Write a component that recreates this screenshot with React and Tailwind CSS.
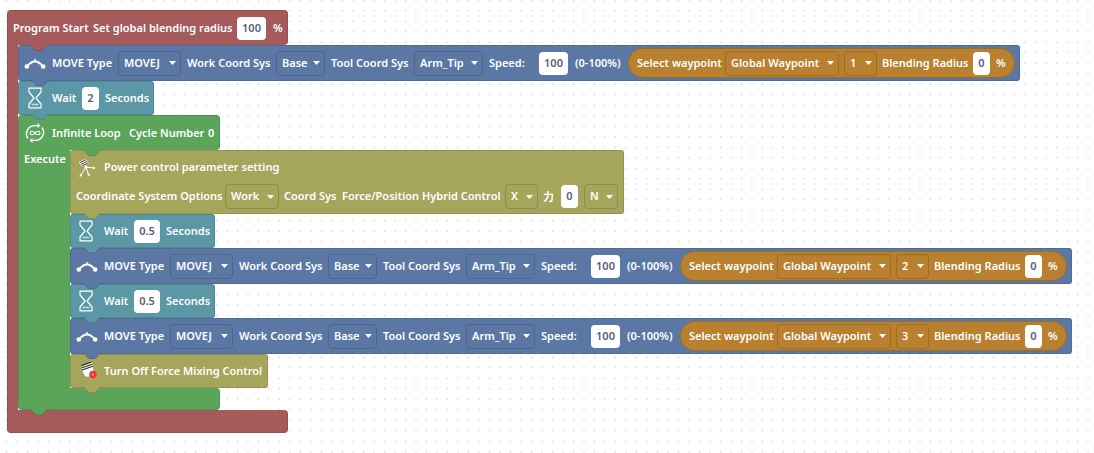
const RED = "#a55b5b";
const BLUE = "#5b78a5";
const TEAL = "#5b97a5";
const GREEN = "#5ba55b";
const OLIVE = "#a5a55b";

// Puzzle tab hanging from the bottom of a block, over the next one
const Tab = ({ color, className }) => (
  <svg width="22" height="6" viewBox="0 0 22 6" className={`absolute z-10 top-full ${className}`}>
    <path d="M0 0 C2 0 3 .6 4 1.6 L6.5 4.6 C7.2 5.5 8 6 9 6 H13 C14 6 14.8 5.5 15.5 4.6 L18 1.6 C19 .6 20 0 22 0Z" fill={color} />
    <path d="M1 0 C2.4 0 3 .6 4 1.6 L6.5 4.6 C7.2 5.5 8 5.6 9 5.6 H13 C14 5.6 14.8 5.5 15.5 4.6 L18 1.6 C19 .6 19.6 0 21 0" fill="none" stroke="#000" strokeOpacity=".15" />
  </svg>
);

const Caret = () => (
  <svg width="7" height="4" viewBox="0 0 7 4" className="shrink-0">
    <path d="M0 0 H7 L3.5 4Z" fill="#fff" />
  </svg>
);

const Label = ({ className, children }) => (
  <span className={`whitespace-nowrap text-white ${className}`}>{children}</span>
);

const Dropdown = ({ className, children }) => (
  <div className={`h-[25px] shrink-0 flex items-center justify-between pl-[5px] pr-[4px] rounded-[4px] border border-black/15 text-white whitespace-nowrap ${className}`}>
    <span>{children}</span>
    <Caret />
  </div>
);

const Input = ({ className, children }) => (
  <div className={`h-[23px] shrink-0 flex items-center justify-center rounded-[4px] bg-white text-[#575e75] ${className}`}>
    {children}
  </div>
);

const MoveIcon = () => (
  <svg width="22" height="12" viewBox="0 0 22 12" className="shrink-0">
    <path d="M3 9.5 Q11 -0.5 19 9.5" fill="none" stroke="#fff" strokeWidth="1.8" />
    <path d="M11 2 V5" stroke="#fff" strokeWidth="1.4" />
    <circle cx="2.8" cy="9.5" r="2.3" fill="#fff" />
    <circle cx="19.2" cy="9.5" r="2.3" fill="#fff" />
  </svg>
);

const HourglassIcon = () => (
  <svg width="16" height="22" viewBox="0 0 16 22" className="shrink-0">
    <path d="M2 1.2 H14 V5 L9 11 L14 17 V20.8 H2 V17 L7 11 L2 5Z" fill="none" stroke="#fff" strokeWidth="1.2" strokeLinejoin="round" />
    <path d="M4.5 17.5 H11.5" stroke="#a9e3f2" strokeWidth="1.6" />
  </svg>
);

const LoopIcon = () => (
  <svg width="22" height="20" viewBox="0 0 22 20" className="shrink-0">
    <path d="M4 15.5 A8.2 8.2 0 0 1 11 2.6 H15" fill="none" stroke="#fff" strokeWidth="1.4" />
    <path d="M18 4.5 A8.2 8.2 0 0 1 11 17.4 H7" fill="none" stroke="#fff" strokeWidth="1.4" />
    <path d="M13.5 0 L16.5 2.6 L13.5 5.2Z M8.5 14.8 L5.5 17.4 L8.5 20Z" fill="#fff" />
    <path d="M11 10 C9.5 7.6 6 7.8 6 10 C6 12.2 9.5 12.4 11 10 C12.5 7.6 16 7.8 16 10 C16 12.2 12.5 12.4 11 10Z" fill="none" stroke="#fff" strokeWidth="1.1" />
  </svg>
);

const ForceIcon = () => (
  <svg width="18" height="20" viewBox="0 0 18 20" className="shrink-0">
    <path d="M1 4 L8 0.6 L10.6 5.6 L3.6 9Z" fill="#fff" />
    <path d="M2 4.6 L8.4 1.6 M2.8 6.4 L9.2 3.4 M3.6 8 L10 5" stroke="#333" strokeWidth="0.9" />
    <path d="M8 9 L2.8 17 M8 9 L10.6 17 M8 9 L16 10" stroke="#fff" strokeWidth="1" />
    <circle cx="8" cy="9" r="1.6" fill="#fff" />
    <path d="M1.6 19 L2 15.6 L4.4 17.4Z M11.6 18.6 L9.2 16.6 L11.8 15.8Z M17.8 10 L15 8.4 L15 11.6Z" fill="#fff" />
  </svg>
);

const ForceOffIcon = () => (
  <svg width="18" height="18" viewBox="0 0 18 18" className="shrink-0">
    <path d="M1 5 L12 0.5 L13.5 9 Q13.5 13 9 14.6 Q5.4 15.6 4 12.5Z" fill="#fff" />
    <path d="M1.2 3.6 L11.4 0 M1.4 6 L12.2 2.2 M2 8 L12.8 4.2" stroke="#2b2b2b" strokeWidth="1.1" />
    <circle cx="13" cy="12.6" r="3.8" fill="#f0393f" />
    <circle cx="13" cy="12.6" r="1" fill="#f8b4b4" />
  </svg>
);

const Move = ({ waypoint }) => (
  <div className="relative w-[1002px] h-[36px] shrink-0 flex items-center pl-[5px] rounded-[3px] border border-black/10" style={{ backgroundColor: BLUE }}>
    <MoveIcon />
    <Label className="w-[72px] pl-[6px]">MOVE Type</Label>
    <Dropdown className="w-[63px]">MOVEJ</Dropdown>
    <Label className="w-[95px] pl-[6px]">Work Coord Sys</Label>
    <Dropdown className="w-[49px]">Base</Dropdown>
    <Label className="w-[89px] pl-[6px]">Tool Coord Sys</Label>
    <Dropdown className="w-[69px]">Arm_Tip</Dropdown>
    <Label className="w-[56px] pl-[6px]">Speed:</Label>
    <Input className="w-[29px]">100</Input>
    <Label className="w-[60px] pl-[7px]">(0-100%)</Label>
    <div className="w-[387px] h-[30px] shrink-0 flex items-center pl-[8px] rounded-full bg-[#b8802f] border border-black/15">
      <Label className="w-[88px]">Select waypoint</Label>
      <Dropdown className="w-[114px]">Global Waypoint</Dropdown>
      <Dropdown className="w-[33px] ml-[5px]">{waypoint}</Dropdown>
      <Label className="w-[96px] pl-[5px]">Blending Radius</Label>
      <Input className="w-[17px]">0</Input>
      <Label className="pl-[6px]">%</Label>
    </div>
    <Tab color={BLUE} className="left-[10px]" />
  </div>
);

const Wait = ({ seconds, inputClass, blockClass, iconClass }) => (
  <div className={`relative h-[34px] shrink-0 flex items-center rounded-[3px] border border-black/10 ${blockClass}`} style={{ backgroundColor: TEAL }}>
    <div className={iconClass}><HourglassIcon /></div>
    <Label className="w-[30px]">Wait</Label>
    <Input className={inputClass}>{seconds}</Input>
    <Label className="pl-[6px]">Seconds</Label>
    <Tab color={TEAL} className="left-[10px]" />
  </div>
);

export default function App() {
  return (
    <div className="w-[1094px] h-[453px] overflow-hidden pl-[7px] pt-[10px] bg-white bg-[radial-gradient(circle,#c8c8c8_0.7px,transparent_1px)] bg-[length:10.5px_10.5px] bg-[position:1.25px_-5px] font-['Noto_Sans',sans-serif] text-[11px] font-semibold">
      <div className="flex flex-col items-start w-fit">
        {/* Program start header */}
        <div className="relative w-[281px] h-[35px] flex items-center pl-[5px] rounded-t-[4px] rounded-br-[4px] border border-b-0 border-black/10" style={{ backgroundColor: RED }}>
          <Label className="w-[80px]">Program Start</Label>
          <Label className="w-[144px]">Set global blending radius</Label>
          <Input className="w-[29px]">100</Input>
          <Label className="pl-[7px]">%</Label>
          <Tab color={RED} className="left-[20px]" />
        </div>

        <div className="flex items-stretch">
          <div className="w-[11px] border-l border-black/10" style={{ backgroundColor: RED }} />
          <div className="flex flex-col items-start">
            <Move waypoint="1" />
            <Wait seconds="2" inputClass="w-[17px]" blockClass="w-[136px] pl-[8px]" iconClass="mr-[9px]" />

            {/* Infinite loop */}
            <div className="relative w-[202px] h-[35px] flex items-center pl-[5px] rounded-t-[4px] rounded-br-[4px] border border-b-0 border-black/10" style={{ backgroundColor: GREEN }}>
              <LoopIcon />
              <Label className="w-[83px] pl-[6px]">Infinite Loop</Label>
              <Label className="w-[79px]">Cycle Number</Label>
              <Label>0</Label>
              <Tab color={GREEN} className="left-[62px]" />
            </div>

            <div className="flex items-stretch">
              <div className="w-[52px] pl-[5px] pt-[2px] border-l border-black/10" style={{ backgroundColor: GREEN }}>
                <Label className="block leading-[14px]">Execute</Label>
              </div>
              <div className="flex flex-col items-start">
                {/* Force control settings */}
                <div className="relative w-[554px] h-[64px] flex flex-col rounded-[3px] border border-black/10" style={{ backgroundColor: OLIVE }}>
                  <div className="flex items-center h-[33px] pl-[7px]">
                    <ForceIcon />
                    <Label className="pl-[8px]">Power control parameter setting</Label>
                  </div>
                  <div className="flex items-center h-[25px] pl-[5px]">
                    <Label className="w-[149px]">Coordinate System Options</Label>
                    <Dropdown className="w-[54px]">Work</Dropdown>
                    <Label className="w-[63px] pl-[5px]">Coord Sys</Label>
                    <Label className="w-[163px]">Force/Position Hybrid Control</Label>
                    <Dropdown className="w-[33px]">X</Dropdown>
                    <Label className="w-[23px] pl-[5px] font-['Noto_Sans_CJK_SC',sans-serif]">力</Label>
                    <Input className="w-[17px]">0</Input>
                    <Dropdown className="w-[34px] ml-[6px]">N</Dropdown>
                  </div>
                  <Tab color={OLIVE} className="left-[10px]" />
                </div>

                <Wait seconds="0.5" inputClass="w-[26px]" blockClass="w-[145px] pl-[7px]" iconClass="mr-[10px]" />
                <Move waypoint="2" />
                <Wait seconds="0.5" inputClass="w-[26px]" blockClass="w-[145px] pl-[7px]" iconClass="mr-[10px]" />
                <Move waypoint="3" />

                {/* Turn off force control */}
                <div className="relative w-[198px] h-[34px] flex items-center pl-[9px] rounded-[3px] border border-black/10" style={{ backgroundColor: OLIVE }}>
                  <ForceOffIcon />
                  <Label className="pl-[6px]">Turn Off Force Mixing Control</Label>
                  <Tab color={OLIVE} className="left-[10px]" />
                </div>
              </div>
            </div>

            <div className="relative w-[202px] h-[22px] rounded-b-[4px] rounded-tr-[4px] border-b border-r border-l border-black/10" style={{ backgroundColor: GREEN }}>
              <Tab color={GREEN} className="left-[9px]" />
            </div>
          </div>
        </div>

        <div className="w-[281px] h-[23px] rounded-b-[4px] rounded-tr-[4px] border border-t-0 border-black/10" style={{ backgroundColor: RED }} />
      </div>
    </div>
  );
}
